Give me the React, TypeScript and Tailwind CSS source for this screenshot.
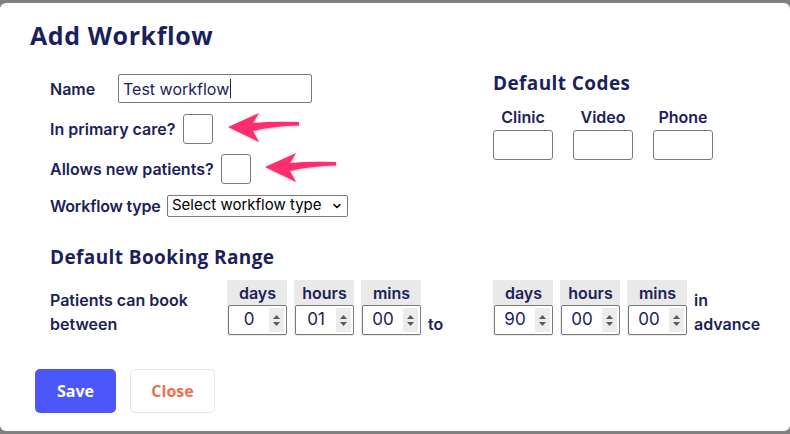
import { ChevronDown } from "lucide-react";

const heading = { fontFamily: '"Open Sans", "Liberation Sans", sans-serif' };
const body = { fontFamily: 'Inter, "Liberation Sans", sans-serif' };

function Arrow() {
  return (
    <svg width="72" height="31" viewBox="0 0 72 31" className="drop-shadow-[1px_1px_1px_rgba(0,0,0,0.2)]">
      <path d="M0 15 L31 1 L25 11 Q45 9 71 10 L71 13.5 Q45 14 25 19 L31 30 Z" fill="#ff2d6f" />
    </svg>
  );
}

function Spinner() {
  return (
    <div className="flex h-[24px] w-[15px] flex-col items-center justify-center gap-[3px] bg-[#ececec]">
      <svg width="7" height="4" viewBox="0 0 7 4">
        <path d="M0 4 L3.5 0 L7 4 Z" fill="#5a5a5a" />
      </svg>
      <svg width="7" height="4" viewBox="0 0 7 4">
        <path d="M0 0 L3.5 4 L7 0 Z" fill="#5a5a5a" />
      </svg>
    </div>
  );
}

function TimeCell({ label, value }: { label: string; value: string }) {
  return (
    <div className="flex w-[60px] flex-col bg-[#e9e9e9] pb-[1px] pl-[1px]">
      <div className="flex h-[25px] items-center justify-center text-[16px] font-semibold text-[#1b2258]">
        {label}
      </div>
      <div className="flex h-[30px] items-center rounded-[2px] border border-[#7a7a7a] bg-white pr-[2px]">
        <span className="flex-1 text-center text-[17px] text-[#1b2258]">{value}</span>
        <Spinner />
      </div>
    </div>
  );
}

function TimeGroup({ values }: { values: string[] }) {
  return (
    <div className="flex gap-[7px]">
      <TimeCell label="days" value={values[0]} />
      <TimeCell label="hours" value={values[1]} />
      <TimeCell label="mins" value={values[2]} />
    </div>
  );
}

function Box({ w }: { w: string }) {
  return <div className={`${w} h-[30px] rounded-[3px] border border-[#7a7a7a] bg-white`} />;
}

export default function App() {
  return (
    <div className="h-[434px] w-[790px] overflow-hidden bg-[#808080] pt-[3px]" style={body}>
      <div className="relative h-[428px] rounded-[6px] bg-white">
        <div className="pl-[30px] pt-[16px]">
          <h1
            className="h-[32px] text-[25px] font-bold leading-[32px] tracking-[0.6px] text-[#1b1f5e]"
            style={heading}
          >
            Add Workflow
          </h1>
        </div>

        <div className="mt-[23px] flex">
          <div className="flex w-[493px] flex-col gap-[11px] pl-[50px]">
            <div className="flex h-[29px] items-center">
              <span className="w-[68px] text-[16px] font-semibold text-[#1b2258]">Name</span>
              <div className="flex h-[29px] w-[194px] items-center rounded-[2px] border border-[#7a7a7a] px-[4px] text-[16px] text-[#1b2258]">
                Test workflow<span className="ml-[1px] h-[19px] w-[1px] bg-[#1b2258]" />
              </div>
            </div>
            <div className="flex h-[29px] items-center">
              <span className="w-[133px] text-[16px] font-semibold text-[#1b2258]">In primary care?</span>
              <Box w="w-[30px]" />
              <div className="ml-[15px] mt-[-2px]">
                <Arrow />
              </div>
            </div>
            <div className="flex h-[29px] items-center">
              <span className="w-[171px] text-[16px] font-semibold text-[#1b2258]">Allows new patients?</span>
              <Box w="w-[30px]" />
              <div className="ml-[14px] mt-[-2px]">
                <Arrow />
              </div>
            </div>
            <div className="mt-[1px] flex h-[21px] items-center">
              <span className="w-[117px] text-[16px] font-semibold tracking-[-0.2px] text-[#1b2258]">
                Workflow type
              </span>
              <div className="flex h-[22px] w-[181px] items-center justify-between rounded-[2px] border border-[#7a7a7a] pl-[4px] pr-[4px] text-[15px] text-black">
                Select workflow type
                <ChevronDown size={12} strokeWidth={3} />
              </div>
            </div>
          </div>

          <div className="-mt-[3px] flex flex-col">
            <h2
              className="h-[24px] text-[19px] font-bold leading-[24px] tracking-[0.4px] text-[#1b1f5e]"
              style={heading}
            >
              Default Codes
            </h2>
            <div className="mt-[12px] flex gap-[20px]">
              {["Clinic", "Video", "Phone"].map((c) => (
                <div key={c} className="flex w-[60px] flex-col items-center gap-[3px]">
                  <span className="h-[20px] text-[16px] font-semibold leading-[20px] text-[#1b2258]">{c}</span>
                  <Box w="w-[60px]" />
                </div>
              ))}
            </div>
          </div>
        </div>

        <div className="mt-[29px] pl-[50px]">
          <h2
            className="h-[24px] text-[19px] font-bold leading-[24px] tracking-[0.4px] text-[#1b1f5e]"
            style={heading}
          >
            Default Booking Range
          </h2>
          <div className="mt-[11px] flex items-end">
            <div className="w-[177px] text-[16px] font-semibold leading-[24px] text-[#1b2258]">
              Patients can book
              <br />
              between
            </div>
            <TimeGroup values={["0", "01", "00"]} />
            <span className="ml-[7px] w-[65px] text-[16px] font-semibold leading-[24px] text-[#1b2258]">to</span>
            <TimeGroup values={["90", "00", "00"]} />
            <span className="ml-[7px] text-[16px] font-semibold leading-[24px] text-[#1b2258]">
              in
              <br />
              advance
            </span>
          </div>
        </div>

        <div className="mt-[33px] flex gap-[14px] pl-[35px]" style={heading}>
          <button className="h-[44px] w-[81px] rounded-[5px] bg-[#4b57fa] text-[16px] font-bold text-white">
            Save
          </button>
          <button className="h-[44px] w-[85px] rounded-[5px] border border-[#e3e5f0] bg-white text-[16px] font-bold text-[#f0704e]">
            Close
          </button>
        </div>
      </div>
    </div>
  );
}
